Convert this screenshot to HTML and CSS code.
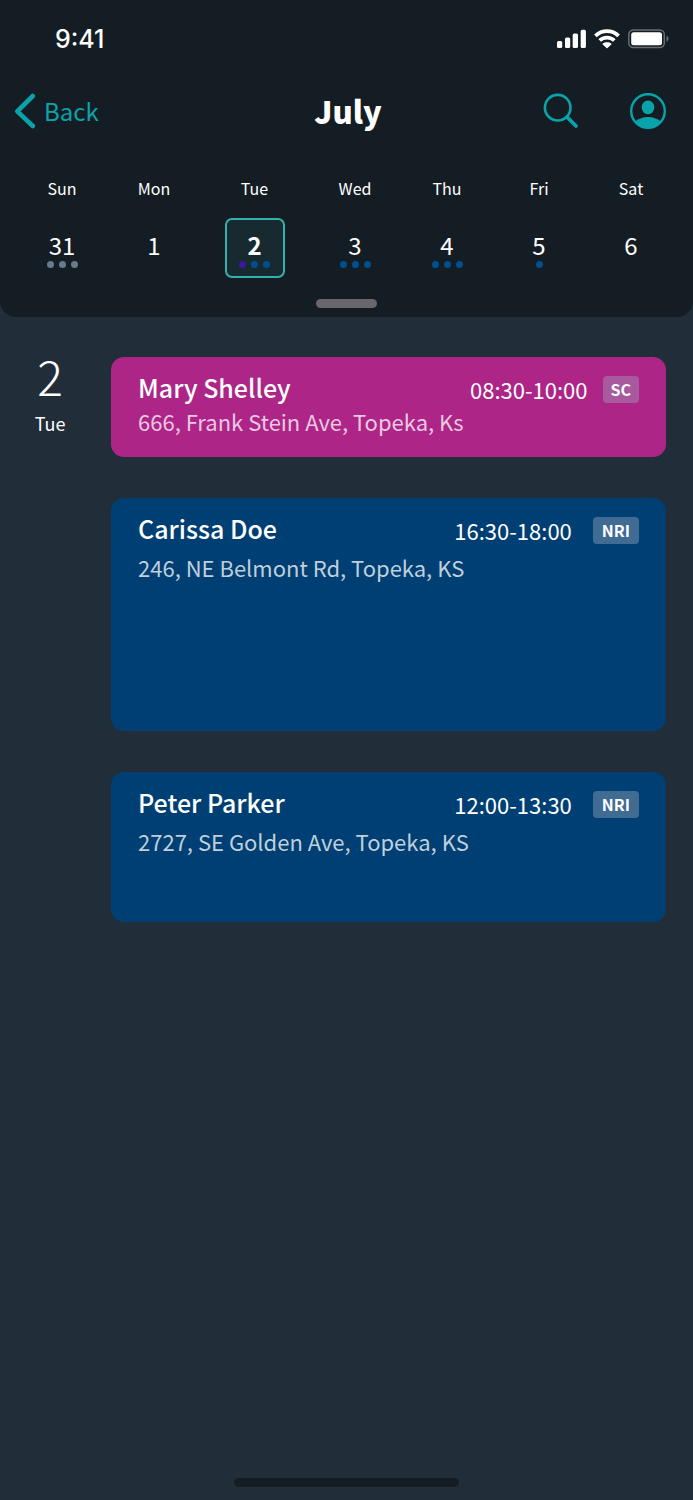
FILE: index.html
```html
<!DOCTYPE html>
<html lang="en">
<head>
<meta charset="utf-8">
<meta name="viewport" content="width=device-width, initial-scale=1">
<title>July</title>
<link rel="stylesheet" href="styles.css">
</head>
<body>
<header class="top">
  <div class="status">
    <time class="clock">9:41</time>
    <svg class="status-icons" width="112" height="20" viewBox="0 0 112 20" aria-hidden="true">
      <g fill="#fff">
        <rect x="0" y="12" width="5.200" height="7" rx="1.500"/>
        <rect x="8" y="8.500" width="5.200" height="10.500" rx="1.500"/>
        <rect x="15.700" y="4.500" width="5.300" height="14.500" rx="1.500"/>
        <rect x="23.700" y="0.700" width="5.200" height="18.300" rx="1.500"/>
        <path d="M50 13.200c1.600 0 3.100.5 4.200 1.400.4.300.4.700.1 1L50.500 19q-.500.400-1 0l-3.800-3.400c-.3-.3-.3-.7.100-1C46.900 13.700 48.400 13.200 50 13.200z"/>
      </g>
      <g fill="none" stroke="#fff" stroke-width="3.700">
        <path d="M38.400 6.900C41.500 3.800 45.600 2.100 50 2.100S58.500 3.800 61.600 6.900"/>
        <path d="M42.700 11.600C44.600 9.600 47.200 8.600 50 8.600s5.400 1 7.300 3"/>
      </g>
      <rect x="71.800" y="0.900" width="35.500" height="17.700" rx="4.500" fill="none" stroke="#686d72" stroke-width="1.500"/>
      <rect x="74.200" y="3.200" width="30.800" height="13" rx="2.500" fill="#fff"/>
      <path d="M109.500 6.800v6c1.200-.5 2-1.700 2-3s-.8-2.500-2-3z" fill="#686d72"/>
    </svg>
  </div>
  <nav class="nav">
    <button class="back" type="button">
      <svg width="22" height="36" viewBox="0 0 22 36" aria-hidden="true"><path d="M18.800 3 3.300 18.300 18.800 33" fill="none" stroke="currentColor" stroke-width="4.600" stroke-linecap="round" stroke-linejoin="round"/></svg>
      <span>Back</span>
    </button>
    <h1 class="title">July</h1>
    <div class="actions">
      <button class="icon" type="button" aria-label="Search">
        <svg width="36" height="36" viewBox="0 0 36 36" fill="none" stroke="currentColor" aria-hidden="true"><circle cx="14.700" cy="14.700" r="12.800" stroke-width="2.600"/><path d="m24 24 9 9" stroke-width="3.800" stroke-linecap="round"/></svg>
      </button>
      <button class="icon" type="button" aria-label="Profile">
        <svg width="36" height="36" viewBox="0 0 36 36" aria-hidden="true"><circle cx="18" cy="18" r="16.800" fill="none" stroke="currentColor" stroke-width="2.400"/><ellipse cx="18" cy="14.300" rx="6.300" ry="6.900" fill="currentColor"/><path d="M5.300 28.500C8.500 25.500 13 23.900 18 23.900s9.500 1.600 12.700 4.600C27.800 32.300 23.200 34.700 18 34.700S8.200 32.300 5.300 28.500z" fill="currentColor"/></svg>
      </button>
    </div>
  </nav>
  <div class="week">
    <div class="day"><span class="weekday">Sun</span><button class="date" type="button">31<span class="dots past"><i></i><i></i><i></i></span></button></div>
    <div class="day"><span class="weekday">Mon</span><button class="date" type="button">1</button></div>
    <div class="day"><span class="weekday">Tue</span><button class="date selected" type="button" aria-current="date">2<span class="dots"><i class="purple"></i><i></i><i></i></span></button></div>
    <div class="day"><span class="weekday">Wed</span><button class="date" type="button">3<span class="dots"><i></i><i></i><i></i></span></button></div>
    <div class="day"><span class="weekday">Thu</span><button class="date" type="button">4<span class="dots"><i></i><i></i><i></i></span></button></div>
    <div class="day"><span class="weekday">Fri</span><button class="date" type="button">5<span class="dots"><i></i></span></button></div>
    <div class="day"><span class="weekday">Sat</span><button class="date" type="button">6</button></div>
  </div>
  <div class="handle"></div>
</header>
<main class="agenda">
  <div class="agenda-day">
    <span class="agenda-number">2</span>
    <span class="agenda-weekday">Tue</span>
  </div>
  <div class="events">
    <article class="event short">
      <div class="event-head"><h2 class="name">Mary Shelley</h2><time class="hours">08:30-10:00</time><span class="badge">SC</span></div>
      <p class="address">666, Frank Stein Ave, Topeka, Ks</p>
    </article>
    <article class="event long">
      <div class="event-head"><h2 class="name">Carissa Doe</h2><time class="hours">16:30-18:00</time><span class="badge">NRI</span></div>
      <p class="address">246, NE Belmont Rd, Topeka, KS</p>
    </article>
    <article class="event medium">
      <div class="event-head"><h2 class="name">Peter Parker</h2><time class="hours">12:00-13:30</time><span class="badge">NRI</span></div>
      <p class="address">2727, SE Golden Ave, Topeka, KS</p>
    </article>
  </div>
</main>
<footer class="home"><div class="home-bar"></div></footer>
</body>
</html>
```
FILE: styles.css
```css
* { box-sizing: border-box; }

body {
  margin: 0;
  min-height: 100vh;
  display: flex;
  flex-direction: column;
  background: #212d38;
  color: #fff;
  font-family: "Noto Sans CJK JP", "Noto Sans", sans-serif;
  font-size: 24px;
}

button {
  padding: 0;
  border: 0;
  background: none;
  color: inherit;
  font: inherit;
}

h1, h2, p { margin: 0; }

.top {
  background: #151d24;
  border-radius: 0 0 16px 16px;
  padding-bottom: 9px;
}

.status {
  height: 78px;
  padding: 0 24px 0 55px;
  display: flex;
  align-items: center;
  justify-content: space-between;
}

.clock {
  font: 500 25px/30px Inter, sans-serif;
}

.nav {
  height: 66px;
  padding: 0 27px 0 14px;
  display: flex;
  align-items: center;
}

.back {
  flex: 1;
  display: flex;
  align-items: center;
  gap: 8px;
  color: #0aa3a9;
  line-height: 36px;
}

.title {
  flex: none;
  padding-left: 16px;
  font-size: 31px;
  line-height: 40px;
  font-weight: 900;
}

.actions {
  flex: 1;
  display: flex;
  justify-content: flex-end;
  gap: 51px;
  color: #0aa3a9;
}

.icon, .icon svg { display: block; }

.week {
  padding: 34px 16px 0;
  display: grid;
  grid-template-columns: 92fr 92fr 109fr 92fr 92fr 92fr 92fr;
}

.day {
  display: flex;
  flex-direction: column;
  align-items: center;
  gap: 20px;
}

.weekday {
  font-size: 16px;
  line-height: 20px;
}

.date {
  width: 60px;
  height: 60px;
  padding-top: 9px;
  border: 2px solid transparent;
  border-radius: 7px;
  display: flex;
  flex-direction: column;
  align-items: center;
  line-height: 32px;
}

.selected {
  border-color: #33b1ac;
  background: #162a2f;
  font-weight: 700;
}

.dots {
  display: flex;
  gap: 5px;
}

.dots i {
  width: 7px;
  height: 7px;
  border-radius: 50%;
  background: #004f8e;
}

.dots.past i { background: #667b8d; }
.dots i.purple { background: #3d189b; }

.handle {
  width: 61px;
  height: 9px;
  margin: 21px auto 0;
  border-radius: 5px;
  background: #69666c;
}

.agenda {
  flex: 1;
  padding: 40px 27px 40px 0;
  display: grid;
  grid-template-columns: 100px 1fr;
  column-gap: 11px;
}

.agenda-day {
  display: flex;
  flex-direction: column;
  align-items: center;
  gap: 18px;
}

.agenda-number {
  font-size: 48px;
  line-height: 36px;
  font-weight: 200;
}

.agenda-weekday {
  font-size: 18px;
  line-height: 24px;
}

.events {
  display: flex;
  flex-direction: column;
  gap: 41px;
}

.event {
  padding: 19px 27px;
  border-radius: 13px;
  background: #003f73;
}

.short { min-height: 100px; background: #ad2587; }
.long { min-height: 233px; }
.medium { min-height: 150px; }

.event-head {
  display: flex;
  align-items: flex-start;
  gap: 21px;
}

.short .event-head { gap: 15px; }

.name {
  flex: 1;
  font-size: 25px;
  line-height: 22px;
  font-weight: 500;
}

.hours {
  font-size: 22px;
  line-height: 27px;
}

.badge {
  padding: 0 9px;
  border-radius: 4px;
  background: #406b92;
  font-size: 16px;
  line-height: 27px;
  font-weight: 700;
}

.short .badge { padding: 0 8px; background: #a95a9e; }

.address {
  margin-top: 9px;
  font-size: 22px;
  line-height: 28px;
  color: #bfcfdc;
}

.short .address { margin-top: 4px; color: #ebc8e1; }

.home {
  padding-bottom: 13px;
  display: flex;
  justify-content: center;
}

.home-bar {
  width: 225px;
  height: 9px;
  border-radius: 5px;
  background: #151d24;
}
```
